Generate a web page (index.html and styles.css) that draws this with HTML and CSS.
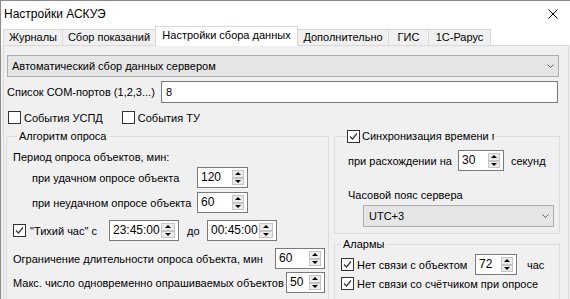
FILE: index.html
```html
<!DOCTYPE html>
<html lang="ru">
<head>
    <meta charset="UTF-8">
    <meta name="viewport" content="width=device-width, initial-scale=1.0">
    <title>Настройки АСКУЭ</title>
    <link rel="stylesheet" href="styles.css">
</head>
<body>
    <div class="window">
        <div class="titlebar">
            <span class="title">Настройки АСКУЭ</span>
            <svg class="close" width="10" height="10" viewBox="0 0 10 10">
                <path d="M0.5 0.5L9.5 9.5M9.5 0.5L0.5 9.5" stroke="#000" stroke-width="1"/>
            </svg>
        </div>

        <div class="tabs">
            <div class="tab tab-logs">Журналы</div>
            <div class="tab tab-reads">Сбор показаний</div>
            <div class="tab tab-collect active">Настройки сбора данных</div>
            <div class="tab tab-extra">Дополнительно</div>
            <div class="tab tab-gis">ГИС</div>
            <div class="tab tab-1c">1С-Рарус</div>
        </div>

        <div class="page">
            <div class="combo">
                <span>Автоматический сбор данных сервером</span>
                <svg class="chevron" width="7" height="4" viewBox="0 0 7 4"><path d="M0.5 0.5L3.5 3.5L6.5 0.5" fill="none" stroke="#606060"/></svg>
            </div>

            <div class="com-row">
                <span class="com-label">Список COM-портов (1,2,3...)</span>
                <div class="edit">8</div>
            </div>

            <div class="check-row">
                <span class="check"></span>
                <span class="check-text">События УСПД</span>
                <span class="check check-tu"></span>
                <span class="check-text">События ТУ</span>
            </div>

            <div class="columns">
                <fieldset class="group poll">
                    <legend>Алгоритм опроса</legend>
                    <div class="line line-period">Период опроса объектов, мин:</div>
                    <div class="line">
                        <span class="sub-label">при удачном опросе объекта</span>
                        <div class="spin spin-period">
                            <span class="spin-value">120</span>
                            <span class="spin-btns"><span class="spin-up"></span><span class="spin-down"></span></span>
                        </div>
                    </div>
                    <div class="line line-fail">
                        <span class="sub-label">при неудачном опросе объекта</span>
                        <div class="spin spin-period">
                            <span class="spin-value">60</span>
                            <span class="spin-btns"><span class="spin-up"></span><span class="spin-down"></span></span>
                        </div>
                    </div>
                    <div class="line line-quiet">
                        <span class="check checked">
                            <svg width="9" height="9" viewBox="0 0 9 9"><path d="M1 4.5L3.5 7L8 1.5" fill="none" stroke="#333" stroke-width="1.2"/></svg>
                        </span>
                        <span class="quiet-label">"Тихий час" с</span>
                        <div class="spin spin-time">
                            <span class="spin-value">23:45:00</span>
                            <span class="spin-btns"><span class="spin-up"></span><span class="spin-down"></span></span>
                        </div>
                        <span class="to-label">до</span>
                        <div class="spin spin-time">
                            <span class="spin-value">00:45:00</span>
                            <span class="spin-btns"><span class="spin-up"></span><span class="spin-down"></span></span>
                        </div>
                    </div>
                    <div class="line line-limit">
                        <span>Ограничение длительности опроса объекта, мин</span>
                        <div class="spin spin-limit">
                            <span class="spin-value">60</span>
                            <span class="spin-btns"><span class="spin-up"></span><span class="spin-down"></span></span>
                        </div>
                    </div>
                    <div class="line line-max">
                        <span>Макс. число одновременно опрашиваемых объектов</span>
                        <div class="spin spin-max">
                            <span class="spin-value">50</span>
                            <span class="spin-btns"><span class="spin-up"></span><span class="spin-down"></span></span>
                        </div>
                    </div>
                </fieldset>

                <div class="right">
                    <fieldset class="group sync">
                        <legend>
                            <span class="check checked">
                                <svg width="9" height="9" viewBox="0 0 9 9"><path d="M1 4.5L3.5 7L8 1.5" fill="none" stroke="#333" stroke-width="1.2"/></svg>
                            </span>
                            <span class="legend-text">Синхронизация времени по серверу</span>
                        </legend>
                        <div class="line">
                            <span class="diff-label">при расхождении на</span>
                            <div class="spin spin-sec">
                                <span class="spin-value">30</span>
                                <span class="spin-btns"><span class="spin-up"></span><span class="spin-down"></span></span>
                            </div>
                            <span class="sec-label">секунд</span>
                        </div>
                        <div class="tz-label">Часовой пояс сервера</div>
                        <div class="combo combo-tz">
                            <span>UTC+3</span>
                            <svg class="chevron" width="7" height="4" viewBox="0 0 7 4"><path d="M0.5 0.5L3.5 3.5L6.5 0.5" fill="none" stroke="#606060"/></svg>
                        </div>
                    </fieldset>

                    <fieldset class="group alarms">
                        <legend>Алармы</legend>
                        <div class="line">
                            <span class="check checked">
                                <svg width="9" height="9" viewBox="0 0 9 9"><path d="M1 4.5L3.5 7L8 1.5" fill="none" stroke="#333" stroke-width="1.2"/></svg>
                            </span>
                            <span class="alarm-label">Нет связи с объектом</span>
                            <div class="spin spin-hours">
                                <span class="spin-value">72</span>
                                <span class="spin-btns"><span class="spin-up"></span><span class="spin-down"></span></span>
                            </div>
                            <span class="hour-label">час</span>
                        </div>
                        <div class="line alarm-row2">
                            <span class="check checked">
                                <svg width="9" height="9" viewBox="0 0 9 9"><path d="M1 4.5L3.5 7L8 1.5" fill="none" stroke="#333" stroke-width="1.2"/></svg>
                            </span>
                            <span class="alarm-label">Нет связи со счётчиком при опросе</span>
                        </div>
                        <div class="line alarm-row3">
                            <span class="check"></span>
                        </div>
                    </fieldset>
                </div>
            </div>
        </div>
    </div>
</body>
</html>
```

FILE: styles.css
```css
* {
    margin: 0;
    padding: 0;
    box-sizing: border-box;
}

body {
    width: 570px;
    height: 299px;
    overflow: hidden;
    background-color: #f0f0f0;
    font-family: "Liberation Sans", Arial, sans-serif;
    font-size: 11px;
    color: #000000;
}

.window {
    width: 570px;
    height: 299px;
    border-top: 1px solid #8a8a8a;
    border-left: 1px solid #8a8a8a;
    background-color: #f0f0f0;
}

/* title bar */
.titlebar {
    height: 25px;
    background-color: #ffffff;
    display: flex;
    align-items: center;
    justify-content: space-between;
    padding: 0 12px 0 3px;
}

.title {
    font-size: 12px;
}

/* tabs */
.tabs {
    display: flex;
    align-items: flex-end;
    height: 19px;
    padding-left: 2px;
    background-color: #ffffff;
}

.tab {
    height: 16px;
    margin-left: -1px;
    border: 1px solid #d9d9d9;
    border-bottom: none;
    background-color: #f0f0f0;
    line-height: 15px;
    text-align: center;
    white-space: nowrap;
}

.tab:first-child {
    margin-left: 0;
}

.tab.active {
    height: 20px;
    margin-bottom: -1px;
    background-color: #ffffff;
    line-height: 17px;
    position: relative;
    z-index: 1;
}

.tab-logs { width: 60px; }
.tab-reads { width: 94px; }
.tab-collect { width: 143px; }
.tab-extra { width: 92px; }
.tab-gis { width: 41px; }
.tab-1c { width: 63px; }

/* page */
.page {
    height: 254px;
    margin: 0 1px 0 2px;
    padding: 9px 9px 0 3px;
    border: 1px solid #d9d9d9;
    border-bottom: none;
    background-color: #f0f0f0;
}

.combo {
    display: flex;
    align-items: center;
    justify-content: space-between;
    height: 22px;
    padding: 0 4px 0 4px;
    border: 1px solid #adadad;
    background-color: #e5e5e5;
}

.com-row {
    display: flex;
    align-items: center;
    height: 22px;
    margin-top: 4px;
}

.com-label {
    width: 154px;
    flex: none;
}

.edit {
    flex: 1;
    height: 22px;
    margin-right: 1px;
    padding-left: 4px;
    border: 1px solid #7a7a7a;
    background-color: #ffffff;
    line-height: 20px;
}

.check-row {
    display: flex;
    align-items: center;
    height: 13px;
    margin-top: 8px;
    padding-left: 1px;
}

.check {
    width: 13px;
    height: 13px;
    flex: none;
    display: flex;
    align-items: center;
    justify-content: center;
    border: 1px solid #333333;
    background-color: #ffffff;
}

.check-text {
    margin-left: 3px;
}

.check-tu {
    margin-left: 19px;
}

/* group boxes */
.columns {
    display: flex;
    align-items: flex-start;
    gap: 5px;
    margin-top: 6px;
    margin-left: -1px;
}

.group {
    border: 1px solid #dcdcdc;
}

.group legend {
    line-height: 13px;
    padding: 0 2px;
}

.poll {
    width: 323px;
    height: 200px;
    flex: none;
    padding: 4px 3px 0 6px;
}

.poll legend {
    margin-left: 4px;
}

.line {
    display: flex;
    align-items: center;
    height: 21px;
    white-space: nowrap;
}

.line-period {
    height: 20px;
}

.line-fail {
    margin-top: 4px;
}

.line-quiet {
    margin-top: 7px;
}

.line-limit {
    margin-top: 7px;
    justify-content: space-between;
}

.line-max {
    margin-top: 3px;
    justify-content: space-between;
}

.sub-label {
    width: 184px;
    padding-left: 19px;
    flex: none;
}

.quiet-label {
    width: 79px;
    margin-left: 4px;
    flex: none;
}

.to-label {
    width: 28px;
    padding-left: 8px;
    flex: none;
}

/* spin edits */
.spin {
    display: flex;
    height: 21px;
    flex: none;
    border: 1px solid #7a7a7a;
    background-color: #ffffff;
}

.spin-value {
    flex: 1;
    padding-left: 3px;
    line-height: 19px;
    font-size: 12px;
}

.spin-btns {
    display: flex;
    flex-direction: column;
    width: 12px;
    margin: 2px 3px 2px 0;
}

.spin-btns span {
    flex: 1;
    display: flex;
    align-items: center;
    justify-content: center;
    border: 1px solid #c4c4c4;
    background-color: #ececec;
}

.spin-up::before {
    content: "";
    border-left: 3px solid transparent;
    border-right: 3px solid transparent;
    border-bottom: 3px solid #000000;
}

.spin-down::before {
    content: "";
    border-left: 3px solid transparent;
    border-right: 3px solid transparent;
    border-top: 3px solid #000000;
}

.spin-period {
    width: 51px;
}

.spin-time {
    width: 70px;
}

.spin-time .spin-btns {
    width: 14px;
}

.spin-limit {
    width: 50px;
}

.spin-max {
    width: 39px;
}

.spin-sec {
    width: 46px;
}

.spin-hours {
    width: 42px;
}

/* right column */
.right {
    width: 226px;
    flex: none;
    display: flex;
    flex-direction: column;
    gap: 4px;
}

.sync {
    padding: 7px 5px 6px 13px;
}

.sync legend {
    display: flex;
    align-items: center;
    width: 147px;
    margin-left: -1px;
    padding: 0;
    overflow: hidden;
    white-space: nowrap;
}

.legend-text {
    margin-left: 2px;
}

.diff-label {
    width: 110px;
    flex: none;
}

.sec-label {
    margin-left: 7px;
}

.tz-label {
    margin-top: 18px;
    line-height: 13px;
}

.combo-tz {
    margin: 3px 0 0 15px;
    padding-left: 5px;
}

.alarms {
    height: 80px;
    padding: 3px 5px 0 6px;
}

.alarm-label {
    width: 118px;
    margin-left: 3px;
    flex: none;
}

.alarm-row2 .alarm-label {
    width: auto;
}

.alarm-row2 {
    height: 17px;
}

.alarm-row3 {
    margin-top: 6px;
}

.hour-label {
    margin-left: 10px;
}
```
